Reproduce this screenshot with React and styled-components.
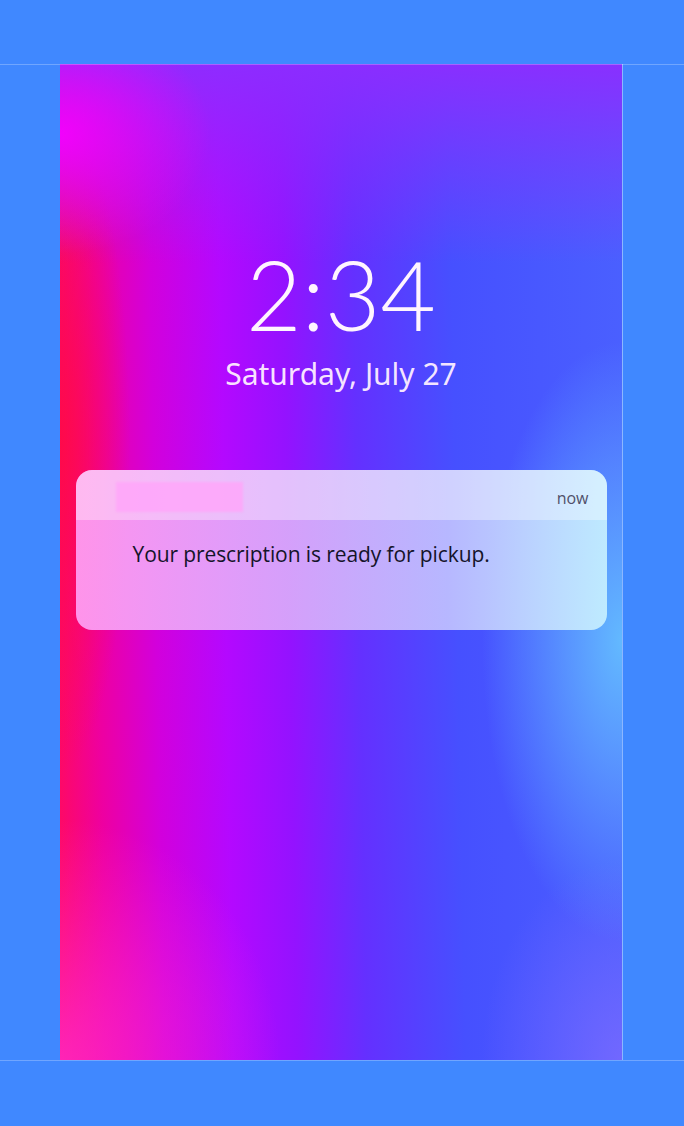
import React from "react";
import styled, { createGlobalStyle } from "styled-components";

const GlobalStyle = createGlobalStyle`
  html, body {
    margin: 0;
    padding: 0;
    background: #4088ff;
  }
  body {
    font-family: "Open Sans", "Noto Sans", sans-serif;
  }
`;

const Page = styled.div`
  width: 684px;
  height: 1126px;
  background: #4088ff;
  padding-top: 64px;
  box-sizing: border-box;
  position: relative;
  overflow: hidden;

  &::before,
  &::after {
    content: "";
    position: absolute;
    left: 0;
    right: 0;
    height: 1px;
    background: rgba(255, 255, 255, 0.25);
  }
  &::before {
    top: 64px;
  }
  &::after {
    top: 1060px;
  }
`;

const Screen = styled.div`
  margin-left: 60px;
  width: 563px;
  height: 996px;
  box-sizing: border-box;
  border-right: 1px solid rgba(255, 255, 255, 0.4);
  background-clip: padding-box;
  display: flex;
  flex-direction: column;
  align-items: center;
  background-image:
    radial-gradient(ellipse 150px 120px at 0% 7%, rgba(245, 0, 255, 0.95), rgba(245, 0, 255, 0) 100%),
    linear-gradient(180deg, rgba(140, 45, 255, 0.95) 0%, rgba(140, 45, 255, 0.45) 10%, rgba(140, 45, 255, 0) 20%),
    radial-gradient(ellipse 70px 330px at 0% 38%, rgba(255, 10, 70, 0.9), rgba(255, 10, 70, 0) 100%),
    radial-gradient(ellipse 140px 300px at 100% 58%, rgba(100, 190, 255, 0.95), rgba(100, 190, 255, 0) 100%),
    radial-gradient(ellipse 220px 240px at 0% 100%, rgba(255, 45, 210, 0.75), rgba(255, 45, 210, 0) 100%),
    radial-gradient(ellipse 140px 200px at 100% 100%, rgba(140, 110, 255, 0.6), rgba(140, 110, 255, 0) 100%),
    linear-gradient(89deg, #ff0a60 0%, #ee00a0 8%, #d200dc 18%, #b408ff 30%, #9412ff 41%, #6430ff 53%, #4650ff 70%, #4a60ff 100%);
`;

const Clock = styled.div`
  margin-top: 182px;
  font-family: "Lato", "Noto Sans", sans-serif;
  font-weight: 300;
  font-size: 96px;
  line-height: 96px;
  color: #fff5ff;
`;

const DateLine = styled.div`
  margin-top: 12px;
  font-family: "Noto Sans", "Open Sans", sans-serif;
  font-size: 30px;
  line-height: 40px;
  color: rgba(255, 240, 255, 0.95);
`;

const Card = styled.div`
  margin-top: 76px;
  width: 531px;
  height: 160px;
  border-radius: 16px;
  overflow: hidden;
  display: flex;
  flex-direction: column;
  background: linear-gradient(90deg, rgba(255, 160, 245, 0.92) 0%, rgba(220, 175, 250, 0.9) 40%, rgba(195, 195, 255, 0.9) 70%, rgba(195, 238, 255, 0.95) 100%);
`;

const CardHeader = styled.div`
  height: 50px;
  display: flex;
  align-items: center;
  justify-content: space-between;
  padding: 0 18px 0 40px;
  background: rgba(255, 255, 255, 0.35);
`;

const AppName = styled.div`
  width: 127px;
  height: 30px;
  margin-top: 3px;
  background: rgba(255, 165, 250, 0.8);
  filter: blur(1px);
`;

const Time = styled.span`
  font-size: 16px;
  color: #50506a;
  margin-top: 6px;
`;

const Message = styled.div`
  padding: 20px 0 0 57px;
  font-size: 21px;
  color: #14142a;
  letter-spacing: -0.1px;
`;

export default function App() {
  return (
    <Page>
      <GlobalStyle />
      <Screen>
        <Clock>2:34</Clock>
        <DateLine>Saturday, July 27</DateLine>
        <Card>
          <CardHeader>
            <AppName />
            <Time>now</Time>
          </CardHeader>
          <Message>Your prescription is ready for pickup.</Message>
        </Card>
      </Screen>
    </Page>
  );
}
